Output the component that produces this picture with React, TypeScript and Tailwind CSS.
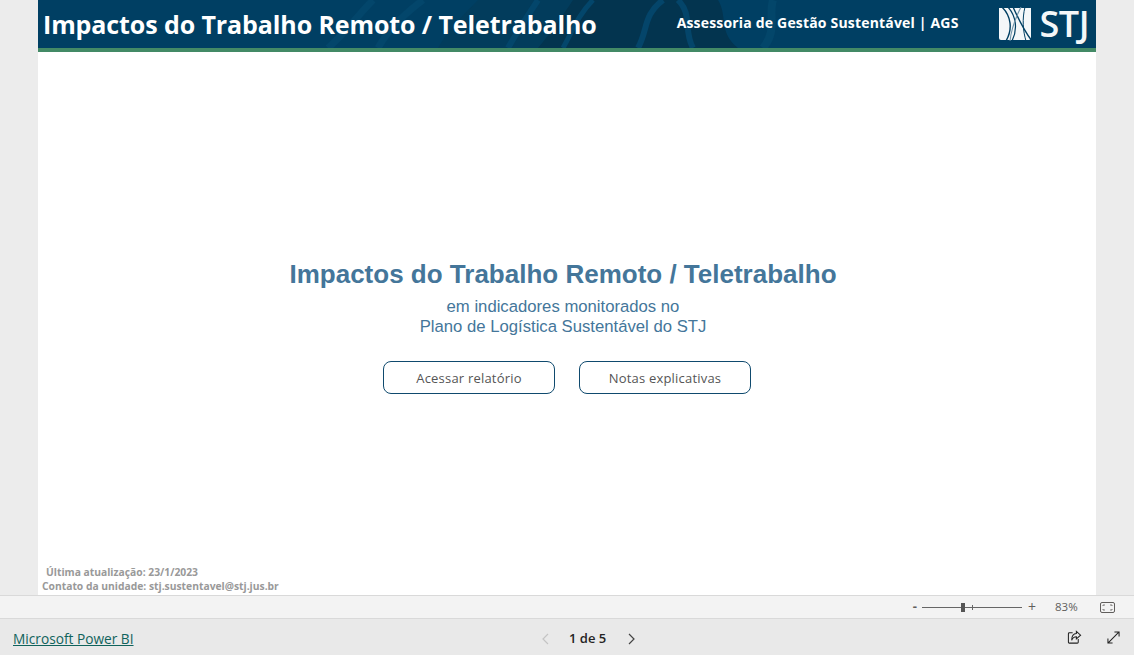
import React from "react";

function HeaderPattern() {
  return (
    <svg className="absolute inset-0 h-full w-full" viewBox="0 0 1058 48" preserveAspectRatio="none" fill="none">
      <rect width="1058" height="48" fill="#003f63" />
      <path d="M400 48C410 30 425 15 440 0H610C600 16 615 32 600 48Z" fill="#023c5c" />
      <path d="M500 48C515 30 525 15 535 0H680C690 16 680 32 700 48Z" fill="#03344f" />
      <path d="M290 48C310 30 320 15 335 0" stroke="#03466b" strokeWidth="7" />
      <path d="M340 48C350 30 365 15 385 0" stroke="#03466b" strokeWidth="7" />
      <path d="M470 48C480 30 490 15 500 0" stroke="#03466b" strokeWidth="6" />
      <path d="M525 48C535 30 540 15 555 0" stroke="#03466b" strokeWidth="5" />
      <path d="M600 48C610 30 605 15 625 0" stroke="#04456a" strokeWidth="6" />
      <path d="M655 48C645 30 655 15 640 0" stroke="#04456a" strokeWidth="6" />
      <path d="M725 48C740 30 730 15 735 0" stroke="#03466a" strokeWidth="8" />
    </svg>
  );
}

function Logo() {
  return (
    <div className="flex items-center">
      <svg width="34" height="34" viewBox="0 0 34 34" fill="none">
        <path d="M1 1H33V31Q33 33 31 33H3Q1 33 1 31Z" fill="#f4f7f9" />
        <path d="M4 0C13 9 15 22 8 34" stroke="#003f63" strokeWidth="1.4" />
        <path d="M10 0C18 9 20 22 14 34" stroke="#003f63" strokeWidth="1.2" />
        <path d="M15 0C20 11 26 24 34 34" stroke="#003f63" strokeWidth="1.4" />
        <path d="M23 0C17 12 13 24 12 34" stroke="#6f93a8" strokeWidth="1.1" />
        <path d="M27 0C24 12 25 24 28 34" stroke="#003f63" strokeWidth="1" />
      </svg>
      <span className="ml-[8px] font-['Open_Sans',sans-serif] text-[36px] leading-none font-semibold tracking-[-0.5px] text-[#f4f7f9]">
        STJ
      </span>
    </div>
  );
}

function Btn({ children }: { children: React.ReactNode }) {
  return (
    <button className="h-[33px] w-[172px] rounded-[8px] border border-[#0f4a6e] bg-white pt-[2px] font-['Open_Sans',sans-serif] text-[13px] tracking-[0.2px] text-[#555]">
      {children}
    </button>
  );
}

export default function App() {
  return (
    <div className="flex h-[655px] w-[1134px] flex-col overflow-hidden bg-[#ececec] font-['Open_Sans',sans-serif]">
      <main className="mx-[38px] flex h-[595px] w-[1058px] flex-col bg-white">
        <header className="relative flex h-[52px] shrink-0 items-start border-b-4 border-[#438a66]">
          <HeaderPattern />
          <h1 className="relative mt-[6px] ml-[5px] text-[25px] leading-[36px] font-bold tracking-[-0.1px] text-white">
            Impactos do Trabalho Remoto / Teletrabalho
          </h1>
          <span className="relative mt-[13px] ml-auto text-[14px] leading-[20px] font-bold tracking-[0.18px] text-white">
            Assessoria de Gestão Sustentável | AGS
          </span>
          <div className="relative mt-[6px] mr-[7px] ml-[39px]">
            <Logo />
          </div>
        </header>

        <section className="flex flex-1 flex-col items-center pt-[207px]">
          <h2 className="-ml-[8px] font-['Liberation_Sans',sans-serif] text-[26px] leading-[30px] font-bold text-[#44769a]">
            Impactos do Trabalho Remoto / Teletrabalho
          </h2>
          <p className="mt-[8px] -ml-[8px] text-center font-['Liberation_Sans',sans-serif] text-[16.7px] leading-[20px] text-[#44769a]">
            em indicadores monitorados no
            <br />
            Plano de Logística Sustentável do STJ
          </p>
          <div className="mt-[24px] flex gap-[24px]">
            <Btn>Acessar relatório</Btn>
            <Btn>Notas explicativas</Btn>
          </div>
        </section>

        <div className="pb-[2px] text-[10.3px] leading-[14px] font-bold text-[#999]">
          <div className="pl-[8px]">Última atualização: 23/1/2023</div>
          <div className="pl-[4px]">Contato da unidade: stj.sustentavel@stj.jus.br</div>
        </div>
      </main>

      <div className="flex h-[24px] items-center justify-end border-y border-[#d9d9d9] bg-[#f3f3f3] text-[#605e5c]">
        <span className="-mt-[1px] mr-[5px] text-[13px] leading-none font-bold">-</span>
        <div className="relative h-[1px] w-[100px] bg-[#666]">
          <div className="absolute top-[-4px] left-[39px] h-[9px] w-[4px] bg-[#555]" />
          <div className="absolute top-[-2px] left-[50px] h-[5px] w-[1px] bg-[#666]" />
        </div>
        <span className="ml-[6px] text-[14px] leading-none">+</span>
        <span className="ml-[19px] w-[24px] text-[11.5px]">83%</span>
        <svg className="mr-[19px] ml-[21px]" width="15" height="11" viewBox="0 0 15 11" fill="none" stroke="#605e5c">
          <rect x="0.5" y="0.5" width="14" height="10" rx="1.5" />
          <path d="M3 4V3H5M10 3H12V4M3 7V8H5M10 8H12V7" strokeWidth="0.8" />
        </svg>
      </div>

      <footer className="relative flex flex-1 items-center bg-[#e9e9e9]">
        <a className="mt-[5px] ml-[13px] text-[13.7px] text-[#10635c] underline">Microsoft Power BI</a>
        <div className="absolute left-[541px] mt-[3px] flex items-center">
          <svg width="10" height="12" viewBox="0 0 10 12" fill="none" stroke="#c4c4c4" strokeWidth="1.2">
            <path d="M7 1 2 6l5 5" />
          </svg>
          <span className="ml-[18px] text-[13px] font-semibold text-[#252423]">1 de 5</span>
          <svg className="ml-[20px]" width="10" height="12" viewBox="0 0 10 12" fill="none" stroke="#444" strokeWidth="1.2">
            <path d="m3 1 5 5-5 5" />
          </svg>
        </div>
        <div className="mt-[1px] ml-auto flex items-center">
          <svg width="15" height="15" viewBox="0 0 16 16" fill="none" stroke="#222" strokeWidth="1.1">
            <path d="M6 3H2.500A1 1 0 0 0 1.500 4v9a1 1 0 0 0 1 1H11a1 1 0 0 0 1-1V9.500" />
            <path d="M10 1.500 14.500 5.500 10 9.500V7.300C7.500 7.300 6 8.500 5 11 5 7 6.800 4 10 3.800Z" />
          </svg>
          <svg className="mr-[14px] ml-[25px]" width="13" height="13" viewBox="0 0 14 14" fill="none" stroke="#222" strokeWidth="1.1">
            <path d="M1 13 13 1M8 1h5v5M1 8v5h5" />
          </svg>
        </div>
      </footer>
    </div>
  );
}
